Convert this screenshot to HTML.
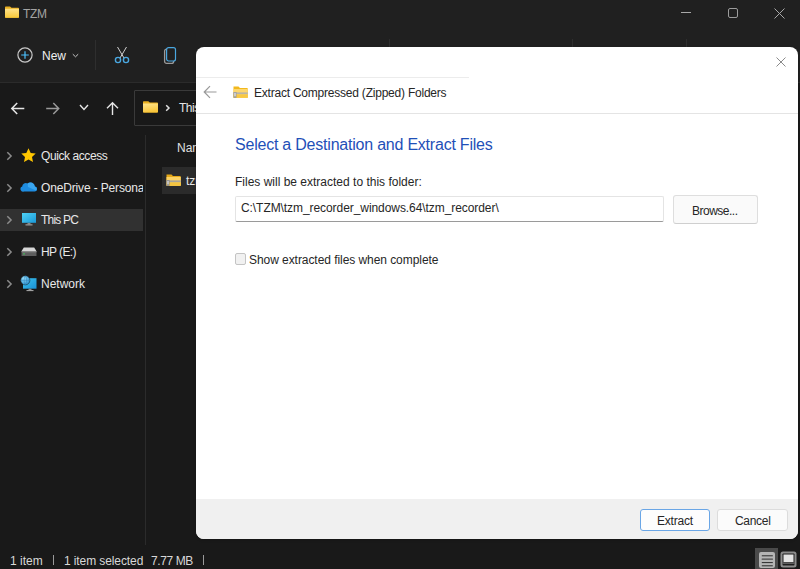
<!DOCTYPE html>
<html><head><meta charset="utf-8">
<style>
*{margin:0;padding:0;box-sizing:border-box}
html,body{width:800px;height:569px;overflow:hidden;background:#191919;font-family:"Liberation Sans",sans-serif}
.abs{position:absolute}
.t{position:absolute;white-space:pre;font-size:12px;line-height:14px}
#top{left:0;top:0;width:800px;height:82px;background:#202020}
#topline{left:0;top:82px;width:800px;height:1px;background:#2b2b2b}
</style></head><body>
<div id="top" class="abs"></div>
<div id="topline" class="abs"></div>

<!-- title -->
<svg class="abs" style="left:5px;top:6px" width="14" height="12" viewBox="0 0 14 12">
  <defs><linearGradient id="fg1" x1="0" y1="0" x2="0" y2="1"><stop offset="0" stop-color="#ffe28a"/><stop offset="1" stop-color="#f8c838"/></linearGradient></defs>
  <path d="M0.8 0.5h4.2l1.5 1.3h6.7a.8.8 0 0 1 .8.8V11a.8.8 0 0 1-.8.8H.8A.8.8 0 0 1 0 11V1.3A.8.8 0 0 1 .8.5z" fill="#eab020"/>
  <path d="M0 2.8h14V11a.8.8 0 0 1-.8.8H.8A.8.8 0 0 1 0 11z" fill="url(#fg1)"/>
</svg>
<div class="t" style="left:23px;top:7px;color:#a4a4a4;letter-spacing:-0.3px">TZM</div>

<!-- window controls -->
<div class="abs" style="left:681px;top:12px;width:10px;height:1px;background:#a8a8a8"></div>
<div class="abs" style="left:728px;top:8px;width:10px;height:10px;border:1.3px solid #9c9c9c;border-radius:2px"></div>
<svg class="abs" style="left:774px;top:8px" width="11" height="11" viewBox="0 0 11 11"><path d="M0.5 0.5L10.5 10.5M10.5 0.5L0.5 10.5" stroke="#a8a8a8" stroke-width="1"/></svg>

<!-- toolbar -->
<svg class="abs" style="left:16px;top:46px" width="18" height="18" viewBox="0 0 18 18">
  <circle cx="9" cy="9" r="7.1" fill="none" stroke="#c8c8c8" stroke-width="1.2"/>
  <path d="M9 5.2v7.6M5.2 9h7.6" stroke="#4cc2ff" stroke-width="1.2"/>
</svg>
<div class="t" style="left:42px;top:49px;color:#f0f0f0">New</div>
<svg class="abs" style="left:72px;top:53px" width="7" height="5" viewBox="0 0 7 5"><path d="M0.8 1.2l2.7 2.6 2.7-2.6" fill="none" stroke="#c8c8c8" stroke-width="1"/></svg>
<div class="abs" style="left:95px;top:40px;width:1px;height:30px;background:#2e2e2e"></div>
<div class="abs" style="left:389px;top:39px;width:1px;height:30px;background:#2e2e2e"></div>
<div class="abs" style="left:572px;top:39px;width:1px;height:30px;background:#2e2e2e"></div>
<div class="abs" style="left:686px;top:39px;width:1px;height:30px;background:#2e2e2e"></div>
<svg class="abs" style="left:113px;top:46px" width="18" height="19" viewBox="0 0 18 19">
  <path d="M4.5 1l6.5 11M13.5 1L7 12" stroke="#d0d0d0" stroke-width="1"/>
  <circle cx="5" cy="14" r="2.6" fill="none" stroke="#4aa7e0" stroke-width="1.4"/>
  <circle cx="13" cy="14" r="2.6" fill="none" stroke="#4aa7e0" stroke-width="1.4"/>
</svg>
<svg class="abs" style="left:162px;top:46px" width="16" height="19" viewBox="0 0 16 19">
  <rect x="2.6" y="3.2" width="9" height="14.2" rx="2" fill="none" stroke="#9a9a9a" stroke-width="1.3"/>
  <rect x="4.6" y="1.7" width="8.9" height="13.3" rx="2" fill="#202020" stroke="#4aa7e0" stroke-width="1.2"/>
</svg>

<!-- nav row -->
<svg class="abs" style="left:10px;top:101px" width="15" height="14" viewBox="0 0 15 14"><path d="M1.8 7.5h12.5M7.2 2L1.8 7.5l5.4 5.5" fill="none" stroke="#e6e6e6" stroke-width="1.5"/></svg>
<svg class="abs" style="left:45px;top:101px" width="15" height="14" viewBox="0 0 15 14"><path d="M1.2 7.5h12.5M8.3 2l5.4 5.5-5.4 5.5" fill="none" stroke="#9a9a9a" stroke-width="1.5"/></svg>
<svg class="abs" style="left:79px;top:104px" width="10" height="7" viewBox="0 0 10 7"><path d="M1 1l4 4.5L9 1" fill="none" stroke="#e6e6e6" stroke-width="1.4"/></svg>
<svg class="abs" style="left:106px;top:101px" width="14" height="14" viewBox="0 0 14 14"><path d="M6.5 1.8v12.5M1 7.2l5.5-5.4 5.5 5.4" fill="none" stroke="#e6e6e6" stroke-width="1.4"/></svg>
<div class="abs" style="left:134px;top:90px;width:80px;height:36px;border:1px solid #3a3a3a;background:#191919;border-radius:1px"></div>
<svg class="abs" style="left:143px;top:101px" width="15" height="12" viewBox="0 0 15 12">
  <defs><linearGradient id="fg2" x1="0" y1="0" x2="0.3" y2="1"><stop offset="0" stop-color="#ffe590"/><stop offset="1" stop-color="#f9c63a"/></linearGradient></defs>
  <path d="M0.8 0.3h4.5l1.5 1.3h7.4a.8.8 0 0 1 .8.8V10.8a.8.8 0 0 1-.8.8H.8A.8.8 0 0 1 0 10.8V1.1A.8.8 0 0 1 .8.3z" fill="#eab020"/>
  <path d="M0 2.5h15V10.8a.8.8 0 0 1-.8.8H.8A.8.8 0 0 1 0 10.8z" fill="url(#fg2)"/>
</svg>
<svg class="abs" style="left:165px;top:104px" width="6" height="8" viewBox="0 0 6 8"><path d="M1.2 1.2l2.8 2.8-2.8 2.8" fill="none" stroke="#e0e0e0" stroke-width="1.5"/></svg>
<div class="t" style="left:179px;top:101px;color:#e4e4e4;letter-spacing:-0.5px">This</div>

<!-- sidebar -->
<div class="abs" style="left:0;top:209px;width:143px;height:22px;background:#313131"></div>
<div class="abs" style="left:145px;top:135px;width:1px;height:410px;background:#2b2b2b"></div>

<svg class="abs" style="left:6px;top:151px" width="7" height="10" viewBox="0 0 7 10"><path d="M1.3 1.2l3.8 3.8-3.8 3.8" fill="none" stroke="#8c8c8c" stroke-width="1.5"/></svg>
<svg class="abs" style="left:6px;top:183px" width="7" height="10" viewBox="0 0 7 10"><path d="M1.3 1.2l3.8 3.8-3.8 3.8" fill="none" stroke="#8c8c8c" stroke-width="1.5"/></svg>
<svg class="abs" style="left:6px;top:215px" width="7" height="10" viewBox="0 0 7 10"><path d="M1.3 1.2l3.8 3.8-3.8 3.8" fill="none" stroke="#8c8c8c" stroke-width="1.5"/></svg>
<svg class="abs" style="left:6px;top:247px" width="7" height="10" viewBox="0 0 7 10"><path d="M1.3 1.2l3.8 3.8-3.8 3.8" fill="none" stroke="#8c8c8c" stroke-width="1.5"/></svg>
<svg class="abs" style="left:6px;top:279px" width="7" height="10" viewBox="0 0 7 10"><path d="M1.3 1.2l3.8 3.8-3.8 3.8" fill="none" stroke="#8c8c8c" stroke-width="1.5"/></svg>

<svg class="abs" style="left:21px;top:148px" width="15" height="15" viewBox="0 0 15 15"><path d="M7.5 0.3l2.2 4.6 5 .6-3.7 3.4 1 5-4.5-2.5-4.5 2.5 1-5L0.3 5.5l5-.6z" fill="#ffc600"/></svg>
<svg class="abs" style="left:20px;top:181px" width="17" height="11" viewBox="0 0 17 11">
  <path d="M4 10.5h10.5a2.5 2.5 0 0 0 .3-5A4.3 4.3 0 0 0 7.6 2.6 3.6 3.6 0 0 0 2.2 5.6 2.6 2.6 0 0 0 4 10.5z" fill="#1e8ce0"/>
  <path d="M7.6 2.6A4.3 4.3 0 0 1 14.8 5.5 2.5 2.5 0 0 1 16 9.5L8 6z" fill="#3aa6f0"/>
</svg>
<svg class="abs" style="left:22px;top:213px" width="14" height="13" viewBox="0 0 14 13">
  <defs><linearGradient id="mg" x1="0" y1="0" x2="1" y2="1"><stop offset="0" stop-color="#4fd2f4"/><stop offset="1" stop-color="#1a98d8"/></linearGradient></defs>
  <rect x="0" y="0" width="14" height="9.8" fill="url(#mg)"/>
  <rect x="5.5" y="10" width="3" height="1.4" fill="#8a8a8a"/>
  <rect x="3.5" y="11.4" width="7" height="1" fill="#b0b0b0"/>
</svg>
<svg class="abs" style="left:21px;top:247px" width="16" height="10" viewBox="0 0 16 10">
  <path d="M2.8 0.5h10.4l2.3 3.8V4.5H.5V4.3z" fill="#d6d6d6"/>
  <rect x="0.5" y="4.3" width="15" height="4.8" rx="0.6" fill="#5e5e5e"/>
  <rect x="0.5" y="4.3" width="15" height="0.9" fill="#9a9a9a"/>
  <rect x="2.3" y="6.3" width="1.4" height="1.2" fill="#3fdc5a"/>
</svg>
<svg class="abs" style="left:20px;top:275px" width="17" height="17" viewBox="0 0 17 17">
  <defs><linearGradient id="ng" x1="0" y1="0" x2="1" y2="1"><stop offset="0" stop-color="#3cc4f0"/><stop offset="1" stop-color="#1a90d4"/></linearGradient>
  <radialGradient id="gg" cx="0.35" cy="0.3" r="0.8"><stop offset="0" stop-color="#9ee4ff"/><stop offset="1" stop-color="#1f86c8"/></radialGradient></defs>
  <rect x="3" y="3.2" width="13.5" height="10.5" fill="url(#ng)"/>
  <rect x="8.5" y="13.8" width="3" height="1.3" fill="#8a8a8a"/>
  <rect x="6.5" y="15.1" width="7" height="1" fill="#b0b0b0"/>
  <circle cx="5.3" cy="5.3" r="4.6" fill="url(#gg)" stroke="#1a1a1a" stroke-width="0.5"/>
  <path d="M5.3 0.8c-1.6 1.5-1.6 7.5 0 9M5.3 0.8c1.6 1.5 1.6 7.5 0 9M0.8 5.3h9" fill="none" stroke="#2a7fb8" stroke-width="0.5"/>
</svg>

<div class="abs" style="left:0;top:0;width:143px;height:569px;overflow:hidden">
<div class="t" style="left:41px;top:149px;color:#e8e8e8;letter-spacing:-0.42px">Quick access</div>
<div class="t" style="left:41px;top:181px;color:#e8e8e8;letter-spacing:-0.15px">OneDrive - Persona</div>
<div class="t" style="left:41px;top:213px;color:#e8e8e8;letter-spacing:-0.8px">This PC</div>
<div class="t" style="left:41px;top:245px;color:#e8e8e8;letter-spacing:-0.6px">HP (E:)</div>
<div class="t" style="left:41px;top:277px;color:#e8e8e8">Network</div>

</div>
<!-- content pane -->
<div class="t" style="left:177px;top:141px;color:#e0e0e0">Name</div>
<div class="abs" style="left:162px;top:167px;width:60px;height:27px;background:#2b2b2b"></div>
<svg class="abs" style="left:166px;top:174px" width="15" height="12" viewBox="0 0 15 12">
  <path d="M0.5 0.5h5l1.5 1.5h7a0.8 0.8 0 0 1 .8.8V11a.8.8 0 0 1-.8.8H1.3a.8.8 0 0 1-.8-.8z" fill="#e6a817"/>
  <path d="M0.5 3h14.3v8a.8.8 0 0 1-.8.8H1.3a.8.8 0 0 1-.8-.8z" fill="#fcd265"/>
  <rect x="0.5" y="6.4" width="14.3" height="2" fill="#a8a49a"/>
  <rect x="0.5" y="8.4" width="14.3" height="3.4" fill="#f4c440"/>
  <rect x="0.5" y="6" width="3" height="5.8" fill="#8a8a8a"/>
  <rect x="1.2" y="6.8" width="1.6" height="3.5" fill="#cfcfcf"/>
</svg>
<div class="t" style="left:186px;top:174px;color:#e8e8e8">tzm</div>

<!-- status bar -->
<div class="t" style="left:10px;top:554px;color:#d8d8d8">1 item</div>
<div class="abs" style="left:53px;top:555px;width:1px;height:10px;background:#9a9a9a"></div>
<div class="t" style="left:64px;top:554px;color:#d8d8d8;letter-spacing:-0.1px">1 item selected</div>
<div class="t" style="left:151px;top:554px;color:#d8d8d8;letter-spacing:-0.4px">7.77 MB</div>
<div class="abs" style="left:203px;top:555px;width:1px;height:10px;background:#9a9a9a"></div>

<div class="abs" style="left:755px;top:548px;width:23px;height:21px;background:#4a4a4a"></div>
<svg class="abs" style="left:759px;top:552px" width="17" height="17" viewBox="0 0 17 17">
  <rect x="0" y="0" width="16" height="16" rx="2" fill="#b4b4b4"/>
  <path d="M2.8 3.8h11M2.8 7.2h11M2.8 10.6h11M2.8 13.8h11" stroke="#2a2a2a" stroke-width="1"/>
  <path d="M2.8 7.2h11" stroke="#6a6a6a" stroke-width="1"/>
</svg>
<svg class="abs" style="left:780px;top:551px" width="17" height="17" viewBox="0 0 17 17">
  <rect x="0.5" y="0.5" width="16" height="16" rx="2.5" fill="#8c8c8c"/>
  <rect x="2.5" y="2.5" width="12" height="12" rx="0.8" fill="#1e1e1e"/>
  <rect x="3.5" y="3.5" width="10" height="7.5" fill="#e4e4e4"/>
  <rect x="2.5" y="11.5" width="12" height="1.2" fill="#7a7a7a"/>
</svg>

<!-- dialog -->
<div id="dlg" class="abs" style="left:196px;top:47px;width:602px;height:492px;background:#ffffff;border-radius:8px;overflow:hidden;box-shadow:0 1px 3px rgba(0,0,0,0.2)">
  <div class="abs" style="left:0;top:30px;width:273px;height:1px;background:#ececec"></div>
  <div class="abs" style="left:0;top:66px;width:602px;height:1px;background:#e4e4e4"></div>
  <svg class="abs" style="left:580px;top:10px" width="10" height="10" viewBox="0 0 10 10"><path d="M0.5 0.5L9.5 9.5M9.5 0.5L0.5 9.5" stroke="#8a8a8a" stroke-width="1"/></svg>
  <svg class="abs" style="left:7px;top:38px" width="14" height="14" viewBox="0 0 14 14"><path d="M1.2 7h12.3M7 1.2L1.2 7 7 12.8" fill="none" stroke="#999999" stroke-width="1.2"/></svg>
  <svg class="abs" style="left:37px;top:39px" width="15" height="12" viewBox="0 0 15 12">
    <path d="M0.5 0.5h5l1.5 1.5h7a0.8 0.8 0 0 1 .8.8V11a.8.8 0 0 1-.8.8H1.3a.8.8 0 0 1-.8-.8z" fill="#f2b81c"/>
    <path d="M0.5 3h14.3v8a.8.8 0 0 1-.8.8H1.3a.8.8 0 0 1-.8-.8z" fill="#fdd76e"/>
    <rect x="0.5" y="6.4" width="14.3" height="2" fill="#b9b4a8"/>
    <rect x="0.5" y="8.4" width="14.3" height="3.4" fill="#f8c843"/>
    <rect x="0.5" y="6" width="3" height="5.8" fill="#9a9a9a"/>
    <rect x="1.2" y="6.8" width="1.6" height="3.5" fill="#d8d8d8"/>
  </svg>
  <div class="t" style="left:58px;top:39px;color:#262626;letter-spacing:-0.22px">Extract Compressed (Zipped) Folders</div>

  <div class="t" style="left:39px;top:89px;color:#1f50b8;font-size:16px;line-height:18px;letter-spacing:-0.22px">Select a Destination and Extract Files</div>
  <div class="t" style="left:39px;top:128px;color:#262626">Files will be extracted to this folder:</div>
  <div class="abs" style="left:39px;top:149px;width:429px;height:26px;border:1px solid #e4e4e4;border-bottom:1px solid #9a9a9a;border-radius:2px"></div>
  <div class="t" style="left:45px;top:154px;color:#262626;letter-spacing:-0.07px">C:\TZM\tzm_recorder_windows.64\tzm_recorder\</div>
  <div class="abs" style="left:477px;top:148px;width:85px;height:29px;border:1px solid #dedede;border-bottom-color:#cfcfcf;background:#fafafa;border-radius:3px"></div>
  <div class="t" style="left:496px;top:157px;color:#262626;letter-spacing:-0.5px">Browse...</div>
  <div class="abs" style="left:39px;top:206px;width:11px;height:12px;border:1.5px solid #c4c4c4;border-radius:2px;background:#f1f1f1"></div>
  <div class="t" style="left:53px;top:206px;color:#262626;letter-spacing:-0.06px">Show extracted files when complete</div>

  <div class="abs" style="left:0;top:452px;width:602px;height:40px;background:#f0f0f0"></div>
  <div class="abs" style="left:444px;top:462px;width:70px;height:22px;border:1px solid #6aa6e6;background:#fdfdfd;border-radius:3px"></div>
  <div class="t" style="left:461px;top:467px;color:#262626;letter-spacing:-0.2px">Extract</div>
  <div class="abs" style="left:521px;top:462px;width:71px;height:22px;border:1px solid #dcdcdc;background:#fbfbfb;border-radius:3px"></div>
  <div class="t" style="left:539px;top:467px;color:#262626;letter-spacing:-0.3px">Cancel</div>
</div>
</body></html>
